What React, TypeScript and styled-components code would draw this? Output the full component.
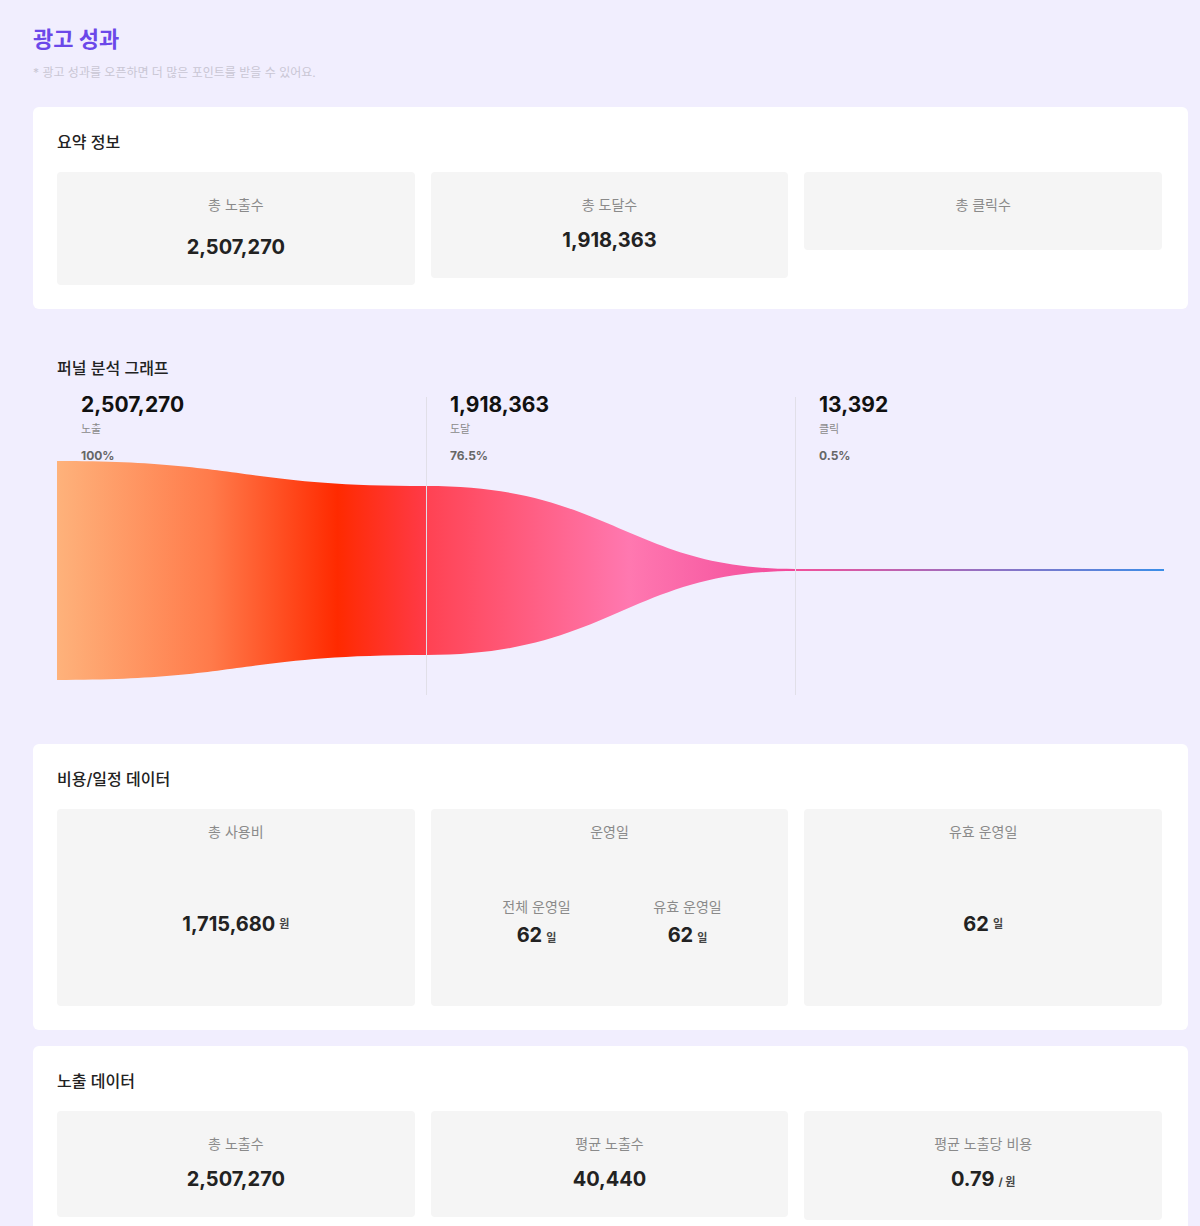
import styled, { createGlobalStyle } from "styled-components";

const GlobalStyle = createGlobalStyle`
  html, body {
    margin: 0;
    padding: 0;
    background: #f1eefe;
  }
  body {
    font-family: Inter, "Noto Sans CJK KR", "Noto Sans", sans-serif;
    color: #222;
  }
`;

const Page = styled.div`
  height: 1226px;
  overflow: hidden;
  padding: 25px 12px 0 33px;
  box-sizing: border-box;
`;

const PageTitle = styled.h1`
  margin: 0;
  font-size: 22px;
  line-height: 28px;
  font-weight: 700;
  color: #6b48e9;
`;

const Notice = styled.p`
  margin: 12px 0 26px;
  font-size: 12px;
  line-height: 16px;
  color: #c9c6d4;
`;

const Panel = styled.section<{ $plain?: boolean }>`
  background: ${(p) => (p.$plain ? "transparent" : "#fff")};
  border-radius: 6px;
  padding: ${(p) => (p.$plain ? "33px 24px 33px" : "25px 26px 24px 24px")};
  margin-bottom: 16px;
`;

const PanelTitle = styled.h2<{ $gap?: number }>`
  margin: 0 0 ${(p) => p.$gap ?? 20}px;
  font-size: 16px;
  line-height: 20px;
  font-weight: 500;
  color: #222;
`;

const CardRow = styled.div`
  display: grid;
  grid-template-columns: repeat(3, 1fr);
  gap: 16px;
  align-items: start;
`;

const Card = styled.div<{ $tall?: boolean }>`
  background: #f5f5f5;
  border-radius: 4px;
  display: flex;
  flex-direction: column;
  align-items: center;
  text-align: center;
  padding: ${(p) => (p.$tall ? "13px 24px 0" : "23px 24px 24px")};
  height: ${(p) => (p.$tall ? "197px" : "auto")};
  box-sizing: border-box;
`;

const CardLabel = styled.div`
  font-size: 14px;
  line-height: 20px;
  color: #8a8a8a;
`;

const CardValue = styled.div<{ $gap?: number }>`
  margin-top: ${(p) => p.$gap ?? 11}px;
  font-size: 20px;
  line-height: 28px;
  font-weight: 700;
  color: #222;
`;

const CenterValue = styled.div`
  flex: 1;
  display: flex;
  align-items: center;
  justify-content: center;
  font-size: 20px;
  line-height: 28px;
  font-weight: 700;
  color: #222;
`;

const Unit = styled.span`
  margin-left: 4px;
  font-size: 11px;
  font-weight: 700;
  color: #444;
`;

const SplitArea = styled.div`
  flex: 1;
  display: flex;
  align-items: center;
  justify-content: center;
  padding-left: 5px;
`;

const SplitItem = styled.div`
  width: 151px;
  display: flex;
  flex-direction: column;
  align-items: center;
`;

const SplitValue = styled.div`
  margin-top: 4px;
  font-size: 20px;
  line-height: 28px;
  font-weight: 700;
  color: #222;
`;

/* funnel */
const Chart = styled.div`
  position: relative;
  height: 302px;
  display: grid;
  grid-template-columns: repeat(3, 1fr);
  margin-top: 15px;
`;

const ChartArt = styled.svg`
  position: absolute;
  inset: 0;
  width: 100%;
  height: 100%;
`;

const Stage = styled.div<{ $divider?: boolean }>`
  position: relative;
  z-index: 1;
  padding-left: 24px;

  &::before {
    content: "";
    display: ${(p) => (p.$divider ? "block" : "none")};
    position: absolute;
    left: 0;
    top: 4px;
    bottom: 0;
    width: 1px;
    background: #e1dfe8;
  }
`;

const StageNumber = styled.div`
  font-size: 21px;
  line-height: 24px;
  font-weight: 700;
  color: #111;
`;

const StageName = styled.div`
  margin-top: 4px;
  font-size: 11px;
  line-height: 16px;
  color: #8a8a8a;
`;

const StagePercent = styled.div`
  margin-top: 11px;
  font-size: 12px;
  line-height: 16px;
  font-weight: 700;
  color: #666;
`;

const stages = [
  { num: "2,507,270", name: "노출", pct: "100%" },
  { num: "1,918,363", name: "도달", pct: "76.5%" },
  { num: "13,392", name: "클릭", pct: "0.5%" },
];

function FunnelArt() {
  const w = 1108 / 3;
  return (
    <ChartArt viewBox="0 0 1108 302" preserveAspectRatio="none">
      <defs>
        <linearGradient id="g1" x1="0" x2="1" y1="0" y2="0">
          <stop offset="0" stopColor="#feb27b" />
          <stop offset="0.42" stopColor="#ff7a4a" />
          <stop offset="0.76" stopColor="#ff2a00" />
          <stop offset="1" stopColor="#ff3a48" />
        </linearGradient>
        <linearGradient id="g2" x1="0" x2="1" y1="0" y2="0">
          <stop offset="0" stopColor="#ff4252" />
          <stop offset="0.55" stopColor="#ff78b0" />
          <stop offset="1" stopColor="#f2489a" />
        </linearGradient>
        <linearGradient id="g3" x1="0" x2="1" y1="0" y2="0">
          <stop offset="0" stopColor="#f2509a" />
          <stop offset="1" stopColor="#3a8ee8" />
        </linearGradient>
      </defs>
      <path
        d={`M0,68 C${w * 0.5},68 ${w * 0.5},93 ${w},93 L${w},262 C${w * 0.5},262 ${w * 0.5},287 0,287 Z`}
        fill="url(#g1)"
      />
      <path
        d={`M${w},93 C${w * 1.5},93 ${w * 1.55},176 ${w * 2},176 L${w * 2},178 C${w * 1.55},178 ${w * 1.5},262 ${w},262 Z`}
        fill="url(#g2)"
      />
      <rect x={w * 2} y={176} width={w} height={2} fill="url(#g3)" />
    </ChartArt>
  );
}

export default function App() {
  return (
    <>
      <GlobalStyle />
      <Page>
        <PageTitle>광고 성과</PageTitle>
        <Notice>* 광고 성과를 오픈하면 더 많은 포인트를 받을 수 있어요.</Notice>

        <Panel>
          <PanelTitle>요약 정보</PanelTitle>
          <CardRow>
            <Card>
              <CardLabel>총 노출수</CardLabel>
              <CardValue $gap={18}>2,507,270</CardValue>
            </Card>
            <Card>
              <CardLabel>총 도달수</CardLabel>
              <CardValue>1,918,363</CardValue>
            </Card>
            <Card>
              <CardLabel>총 클릭수</CardLabel>
              <CardValue style={{ height: 0 }} />
            </Card>
          </CardRow>
        </Panel>

        <Panel $plain>
          <PanelTitle $gap={0}>퍼널 분석 그래프</PanelTitle>
          <Chart>
            <FunnelArt />
            {stages.map((s, i) => (
              <Stage key={s.name} $divider={i > 0}>
                <StageNumber>{s.num}</StageNumber>
                <StageName>{s.name}</StageName>
                <StagePercent>{s.pct}</StagePercent>
              </Stage>
            ))}
          </Chart>
        </Panel>

        <Panel>
          <PanelTitle>비용/일정 데이터</PanelTitle>
          <CardRow>
            <Card $tall>
              <CardLabel>총 사용비</CardLabel>
              <CenterValue>
                1,715,680<Unit>원</Unit>
              </CenterValue>
            </Card>
            <Card $tall>
              <CardLabel>운영일</CardLabel>
              <SplitArea>
                <SplitItem>
                  <CardLabel>전체 운영일</CardLabel>
                  <SplitValue>
                    62<Unit>일</Unit>
                  </SplitValue>
                </SplitItem>
                <SplitItem>
                  <CardLabel>유효 운영일</CardLabel>
                  <SplitValue>
                    62<Unit>일</Unit>
                  </SplitValue>
                </SplitItem>
              </SplitArea>
            </Card>
            <Card $tall>
              <CardLabel>유효 운영일</CardLabel>
              <CenterValue>
                62<Unit>일</Unit>
              </CenterValue>
            </Card>
          </CardRow>
        </Panel>

        <Panel>
          <PanelTitle>노출 데이터</PanelTitle>
          <CardRow>
            <Card>
              <CardLabel>총 노출수</CardLabel>
              <CardValue>2,507,270</CardValue>
            </Card>
            <Card>
              <CardLabel>평균 노출수</CardLabel>
              <CardValue>40,440</CardValue>
            </Card>
            <Card>
              <CardLabel>평균 노출당 비용</CardLabel>
              <CardValue>
                0.79<Unit>/ 원</Unit>
              </CardValue>
            </Card>
          </CardRow>
        </Panel>
      </Page>
    </>
  );
}
